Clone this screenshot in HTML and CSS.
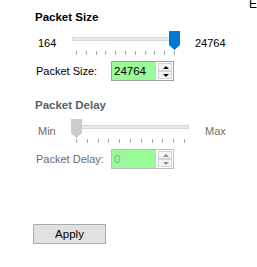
FILE: index.html
```html
<!DOCTYPE html>
<html lang="en">
<head>
  <meta charset="UTF-8">
  <title>Packet Settings</title>
  <link rel="stylesheet" href="styles.css">
</head>
<body>
  <div class="page">
    <div class="panel">
      <h2 class="group-title">Packet Size</h2>
      <div class="slider-row">
        <span class="end-label min-label">164</span>
        <div class="slider slider-size">
          <div class="track"></div>
          <svg class="thumb thumb-end" width="11" height="19" viewBox="0 0 11 19">
            <polygon points="0,0 11,0 11,14 5.5,19 0,14" fill="#0078d7"/>
          </svg>
          <div class="ticks"><i></i><i></i><i></i><i></i><i></i><i></i><i></i><i></i><i></i><i></i><i></i></div>
        </div>
        <span class="end-label max-label">24764</span>
      </div>
      <div class="field-row">
        <label class="field-label" for="packetSize">Packet Size:</label>
        <div class="spinner">
          <input class="spin-value" id="packetSize" value="24764">
          <div class="spin-buttons">
            <span class="spin up"></span>
            <span class="spin down"></span>
          </div>
        </div>
      </div>

      <h2 class="group-title group-gap disabled-title">Packet Delay</h2>
      <div class="slider-row">
        <span class="end-label min-label disabled">Min</span>
        <div class="slider slider-delay">
          <div class="track"></div>
          <svg class="thumb thumb-start" width="11" height="19" viewBox="0 0 11 19">
            <polygon points="0,0 11,0 11,14 5.5,19 0,14" fill="#cccccc"/>
          </svg>
          <div class="ticks"><i></i><i></i><i></i><i></i><i></i><i></i><i></i><i></i><i></i><i></i><i></i></div>
        </div>
        <span class="end-label max-label disabled">Max</span>
      </div>
      <div class="field-row">
        <label class="field-label disabled" for="packetDelay">Packet Delay:</label>
        <div class="spinner spinner-off">
          <input class="spin-value" id="packetDelay" value="0" disabled>
          <div class="spin-buttons">
            <span class="spin up"></span>
            <span class="spin down"></span>
          </div>
        </div>
      </div>

      <button class="apply" type="button">Apply</button>
    </div>
    <span class="edge-text">E</span>
  </div>
</body>
</html>
```

FILE: styles.css
```css
/* Base */
* {
  box-sizing: border-box;
}

body {
  margin: 0;
  background: #fff;
  font-family: "Liberation Sans", Arial, sans-serif;
  font-size: 11px;
  line-height: 15px;
  color: #000;
}

.page {
  display: flex;
  width: 257px;
}

.panel {
  flex: 1;
  padding: 10px 0 0 35px;
}

.edge-text {
  margin-top: -3px;
  font-size: 12px;
  color: #000;
}

/* Group titles */
.group-title {
  margin: 0;
  font-size: 11.5px;
  font-weight: bold;
  line-height: 15px;
}

.group-gap {
  margin-top: 17px;
}

.disabled-title {
  color: #5b5f66;
}

.disabled {
  color: #6d6d6d;
}

/* Slider rows */
.slider-row {
  display: flex;
  align-items: flex-start;
  margin-top: 6px;
}

.end-label {
  margin-top: 5px;
}

.min-label {
  width: 36px;
  padding-left: 3px;
}

.max-label {
  margin-left: 15px;
}

.slider {
  position: relative;
  height: 24px;
}

.slider-size {
  width: 109px;
}

.slider-delay {
  width: 119px;
}

.track {
  height: 4px;
  margin: 6px 1px 0;
  background: #e7eaea;
  border: 1px solid #d6d6d6;
}

.thumb {
  position: absolute;
  top: 0;
  display: block;
}

.thumb-end {
  right: 0;
}

.thumb-start {
  left: 0;
}

.ticks {
  display: flex;
  justify-content: space-between;
  margin-top: 10px;
  padding: 0 5px;
}

.ticks i {
  width: 1px;
  height: 4px;
  background: #a8a8a8;
}

/* Numeric fields */
.field-row {
  display: flex;
  align-items: center;
  margin-top: 6px;
}

.field-label {
  width: 76px;
  padding-left: 1px;
  padding-top: 1px;
}

.spinner {
  display: flex;
  width: 63px;
  height: 20px;
  border: 1px solid #a0a0a0;
  background: #fff;
}

.spin-value {
  flex: 1;
  min-width: 0;
  margin: 0;
  padding: 0 0 0 2px;
  border: none;
  outline: none;
  background: #98fb98;
  font-family: inherit;
  font-size: 11.5px;
  color: #000;
}

.spin-buttons {
  display: flex;
  flex-direction: column;
  width: 17px;
  padding: 1px 1px 1px 2px;
}

.spin {
  position: relative;
  flex: 1;
  background: #f4f4f4;
  border: 1px solid #d4d4d4;
}

.spin::before {
  content: "";
  position: absolute;
  left: 4px;
  top: 2px;
  border-left: 3px solid transparent;
  border-right: 3px solid transparent;
}

.up::before {
  border-bottom: 3px solid #000;
}

.down::before {
  border-top: 3px solid #000;
}

.spinner-off {
  border-color: #bcbcbc;
}

.spinner-off .spin-value {
  color: #a0a0a0;
}

.spinner-off .up::before {
  border-bottom-color: #8c8c8c;
}

.spinner-off .down::before {
  border-top-color: #8c8c8c;
}

/* Apply button */
.apply {
  display: block;
  width: 73px;
  height: 20px;
  margin: 55px 0 0 -2px;
  padding: 0;
  border: 1px solid #adadad;
  background: #e1e1e1;
  font-family: inherit;
  font-size: 11.5px;
  color: #000;
}
```
